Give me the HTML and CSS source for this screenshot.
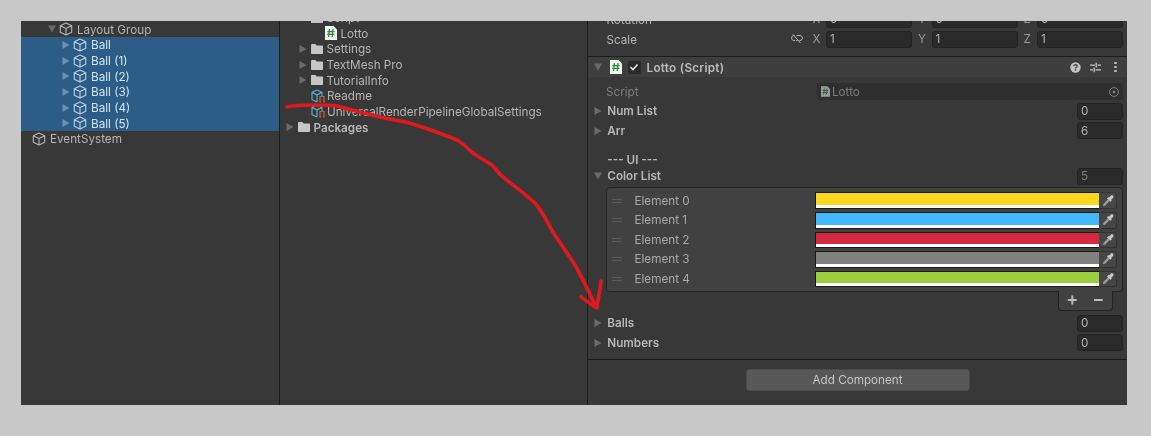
FILE: index.html
```html
<!DOCTYPE html>
<html lang="en">
<head>
<meta charset="utf-8">
<title>Unity Editor - Lotto</title>
<link rel="stylesheet" href="styles.css">
</head>
<body>
<svg class="defs" width="0" height="0" aria-hidden="true">
  <defs>
    <symbol id="cube" viewBox="0 0 14 14">
      <path d="M7 1 12.7 3.8V10.2L7 13 1.3 10.2V3.8Z M1.3 3.8 7 6.6 12.7 3.8 M7 6.6V13" fill="none" stroke="currentColor" stroke-width="1.1" stroke-linejoin="round"/>
    </symbol>
    <symbol id="arrow-r" viewBox="0 0 8 8"><path d="M0.5 0 7.5 4 0.5 8Z" fill="currentColor"/></symbol>
    <symbol id="arrow-d" viewBox="0 0 8 8"><path d="M0 0.5H8L4 7.5Z" fill="currentColor"/></symbol>
    <symbol id="folder" viewBox="0 0 12 10"><path d="M0 1.2C0 .5.4 0 1 0H4.4L5.6 1.6H11C11.6 1.6 12 2 12 2.6V9C12 9.6 11.6 10 11 10H1C.4 10 0 9.6 0 9Z" fill="currentColor"/></symbol>
    <symbol id="script" viewBox="0 0 12 14">
      <path d="M0 0H8.5L12 3.5V14H0Z" fill="#f1f3f0"/>
      <path d="M4.4 3 3.6 11M8 3 7.2 11M2.4 5.6H9.6M2.2 8.4H9.4" stroke="#2f8a3f" stroke-width="1.3" fill="none"/>
    </symbol>
    <symbol id="asset" viewBox="0 0 14 14">
      <path d="M6 1 11 3.4V8M6 13 1 10.6V3.4L6 1M1 3.4 6 5.9 11 3.4M6 5.9V13" fill="none" stroke="#56a9cf" stroke-width="1.2" stroke-linejoin="round"/>
      <path d="M10 7.5H9V13H10M12 7.5H13V13H12" fill="none" stroke="#d9662e" stroke-width="1.1"/>
    </symbol>
    <symbol id="picker" viewBox="0 0 12 12">
      <path d="M1 11 1.3 9 6 4.300 7.700 6 3 10.700Z" fill="#9a9a9a"/>
      <path d="M5 3.400 6.400 2 7 2.600 8.800.8C9.400.2 10.400.2 11 .8S11.600 2.400 11 3L9.200 4.800 9.800 5.400 8.400 6.800Z" fill="currentColor"/>
    </symbol>
  </defs>
</svg>

<div class="window">
  <section class="panel hierarchy">
    <div class="tree">
      <div class="row indent-2"><svg class="tri"><use href="#arrow-d"/></svg><svg class="cube"><use href="#cube"/></svg><span>Layout Group</span></div>
      <div class="row indent-3 selected"><svg class="tri"><use href="#arrow-r"/></svg><svg class="cube"><use href="#cube"/></svg><span>Ball</span></div>
      <div class="row indent-3 selected"><svg class="tri"><use href="#arrow-r"/></svg><svg class="cube"><use href="#cube"/></svg><span>Ball (1)</span></div>
      <div class="row indent-3 selected"><svg class="tri"><use href="#arrow-r"/></svg><svg class="cube"><use href="#cube"/></svg><span>Ball (2)</span></div>
      <div class="row indent-3 selected"><svg class="tri"><use href="#arrow-r"/></svg><svg class="cube"><use href="#cube"/></svg><span>Ball (3)</span></div>
      <div class="row indent-3 selected"><svg class="tri"><use href="#arrow-r"/></svg><svg class="cube"><use href="#cube"/></svg><span>Ball (4)</span></div>
      <div class="row indent-3 selected"><svg class="tri"><use href="#arrow-r"/></svg><svg class="cube"><use href="#cube"/></svg><span>Ball (5)</span></div>
      <div class="row indent-1"><svg class="cube"><use href="#cube"/></svg><span>EventSystem</span></div>
    </div>
  </section>

  <section class="panel project">
    <div class="tree project-tree">
      <div class="row p-indent-1"><svg class="tri"><use href="#arrow-d"/></svg><svg class="folder"><use href="#folder"/></svg><span>Script</span></div>
      <div class="row p-indent-2"><svg class="file"><use href="#script"/></svg><span>Lotto</span></div>
      <div class="row p-indent-1"><svg class="tri"><use href="#arrow-r"/></svg><svg class="folder"><use href="#folder"/></svg><span>Settings</span></div>
      <div class="row p-indent-1"><svg class="tri"><use href="#arrow-r"/></svg><svg class="folder"><use href="#folder"/></svg><span>TextMesh Pro</span></div>
      <div class="row p-indent-1"><svg class="tri"><use href="#arrow-r"/></svg><svg class="folder"><use href="#folder"/></svg><span>TutorialInfo</span></div>
      <div class="row p-indent-leaf"><svg class="asset"><use href="#asset"/></svg><span>Readme</span></div>
      <div class="row p-indent-leaf"><svg class="asset"><use href="#asset"/></svg><span>UniversalRenderPipelineGlobalSettings</span></div>
      <div class="row p-indent-0 strong"><svg class="tri"><use href="#arrow-r"/></svg><svg class="folder"><use href="#folder"/></svg><span>Packages</span></div>
    </div>
  </section>

  <section class="panel inspector">
    <div class="transform">
      <div class="prop">
        <span class="prop-name">Rotation</span>
        <div class="xyz">
          <span class="axis">X</span><span class="field">0</span>
          <span class="axis">Y</span><span class="field">0</span>
          <span class="axis">Z</span><span class="field">0</span>
        </div>
      </div>
      <div class="prop">
        <span class="prop-name">Scale</span>
        <svg class="unlink" viewBox="0 0 12 10"><path d="M3.600 1.500H3C1.600 1.500.6 2.600.6 4S1.600 6.500 3 6.500H4M5.500 1.500H9C10.400 1.500 11.400 2.600 11.400 4S10.400 6.500 9 6.500H8.400M6.500 6.500H5M2 .5 9.500 9" fill="none" stroke="currentColor" stroke-width="1"/></svg>
        <div class="xyz">
          <span class="axis">X</span><span class="field">1</span>
          <span class="axis">Y</span><span class="field">1</span>
          <span class="axis">Z</span><span class="field">1</span>
        </div>
      </div>
    </div>

    <header class="comp-head">
      <svg class="tri head-tri"><use href="#arrow-d"/></svg>
      <svg class="comp-icon"><use href="#script"/></svg>
      <span class="check"><svg viewBox="0 0 10 10"><path d="M1.500 5.200 4 7.500 8.500 2.500" fill="none" stroke="#e4e4e4" stroke-width="1.600"/></svg></span>
      <span class="comp-title">Lotto (Script)</span>
      <svg class="head-btn help" viewBox="0 0 11 11"><circle cx="5.500" cy="5.500" r="5.200" fill="#c4c4c4"/><path d="M3.800 4.300C3.800 3.300 4.500 2.700 5.500 2.700S7.200 3.300 7.200 4.100C7.200 5.200 5.500 5.200 5.500 6.500" fill="none" stroke="#3e3e3e" stroke-width="1.300"/><rect x="4.800" y="7.300" width="1.400" height="1.400" fill="#3e3e3e"/></svg>
      <svg class="head-btn sliders" viewBox="0 0 11 11"><path d="M0 3.200H5M7.500 3.200H11M0 7.800H3M5.500 7.800H11M6.200 .8V5.500M4.200 5.500V10.200" fill="none" stroke="#c4c4c4" stroke-width="1.300"/></svg>
      <span class="kebab"><i></i><i></i><i></i></span>
    </header>

    <div class="comp-body">
      <div class="line script-line">
        <span class="label dim">Script</span>
        <span class="obj-field"><svg class="obj-icon"><use href="#script"/></svg><span>Lotto</span><svg class="target" viewBox="0 0 10 10"><circle cx="5" cy="5" r="4.400" fill="none" stroke="#7f7f7f"/><circle cx="5" cy="5" r="1.300" fill="#7f7f7f"/></svg></span>
      </div>
      <div class="line foldout"><svg class="tri"><use href="#arrow-r"/></svg><span class="label bold">Num List</span><span class="field size">0</span></div>
      <div class="line foldout"><svg class="tri"><use href="#arrow-r"/></svg><span class="label bold">Arr</span><span class="field size">6</span></div>
      <div class="line ui-head"><span class="label bold">--- UI ---</span></div>
      <div class="line foldout color-head"><svg class="tri"><use href="#arrow-d"/></svg><span class="label bold">Color List</span><span class="field size dim-val">5</span></div>

      <div class="list-box">
        <div class="el"><span class="handle"></span><span class="el-name">Element 0</span><span class="swatch"><span class="swatch-fill yellow"></span></span><span class="pick"><svg><use href="#picker"/></svg></span></div>
        <div class="el"><span class="handle"></span><span class="el-name">Element 1</span><span class="swatch"><span class="swatch-fill blue"></span></span><span class="pick"><svg><use href="#picker"/></svg></span></div>
        <div class="el"><span class="handle"></span><span class="el-name">Element 2</span><span class="swatch"><span class="swatch-fill red"></span></span><span class="pick"><svg><use href="#picker"/></svg></span></div>
        <div class="el"><span class="handle"></span><span class="el-name">Element 3</span><span class="swatch"><span class="swatch-fill gray"></span></span><span class="pick"><svg><use href="#picker"/></svg></span></div>
        <div class="el"><span class="handle"></span><span class="el-name">Element 4</span><span class="swatch"><span class="swatch-fill green"></span></span><span class="pick"><svg><use href="#picker"/></svg></span></div>
      </div>
      <div class="list-foot"><span class="plus">+</span><span class="minus">−</span></div>

      <div class="line foldout balls"><svg class="tri"><use href="#arrow-r"/></svg><span class="label bold">Balls</span><span class="field size">0</span></div>
      <div class="line foldout"><svg class="tri"><use href="#arrow-r"/></svg><span class="label bold">Numbers</span><span class="field size">0</span></div>
    </div>

    <div class="add-wrap"><button class="add-btn" type="button">Add Component</button></div>
  </section>
</div>

<svg class="scribble" viewBox="0 0 1151 436" aria-hidden="true">
  <path d="M287 107C295 105 305 105 313 105 322 105 330 105 337 106 352 110 366 114 380 117 392 120 403 121 413 124 428 129 443 134 457 140 463 143 468 149 473 153 480 158 486 161 492 165 496 169 499 174 503 177 514 186 525 194 535 203 543 212 547 222 553 232 560 243 568 254 575 265 583 279 590 294 596 307" fill="none" stroke="#e2191c" stroke-width="3.600" stroke-linecap="round" stroke-linejoin="round"/>
  <path d="M581 297C587 301 592 305 597 308 598 299 600 290 601 281" fill="none" stroke="#e2191c" stroke-width="3.600" stroke-linecap="round" stroke-linejoin="round"/>
</svg>
</body>
</html>
```
FILE: styles.css
```css
* { box-sizing: border-box; }
html, body { margin: 0; height: 100%; }
body {
  position: relative;
  background: #c8c8c8;
  overflow: hidden;
  padding: 20.5px 0 0 21px;
  font-family: Inter, "Liberation Sans", sans-serif;
  font-size: 11.7px;
  color: #b4b4b4;
}
.defs { position: absolute; }
svg { display: block; flex: none; }

.window {
  display: flex;
  width: 1106px;
  height: 384px;
  background: #383838;
  filter: blur(0.45px);
}
.panel { overflow: hidden; height: 100%; }
.hierarchy { width: 257.500px; flex: none; }
.project {
  width: 309px;
  flex: none;
  padding-left: 2px;
  border-left: 1.500px solid #1c1c1c;
  border-right: 1.500px solid #1c1c1c;
}
.inspector { flex: 1; min-width: 0; display: flex; flex-direction: column; }

/* trees */
.tree { padding-top: 1px; }
.project-tree { margin-top: -11.800px; padding-left: 0; }
.row {
  display: flex;
  align-items: center;
  height: 15.670px;
  white-space: nowrap;
  color: #b4b4b4;
}
.row span { padding-top: 1px; }
.row.selected { background: #2c5d87; color: #d5e3ef; }
.row.strong { font-weight: 600; color: #b8b8b8; }
.tri { width: 8px; height: 8px; color: #6a6a6a; }
.selected .tri { color: #6c8eac; }
.cube { width: 14px; height: 14px; margin: 0 4px 0 3px; color: #b4b4b4; }
.selected .cube { color: #bdd0e0; }
.indent-1 { padding-left: 11px; }
.indent-1 .cube { margin-left: 0; }
.indent-2 { padding-left: 27px; }
.indent-3 { padding-left: 41px; }
.folder { width: 12px; height: 10px; margin: 0 4px 0 4px; color: #c6c6c6; }
.file { width: 12px; height: 14px; margin-right: 4px; }
.asset { width: 14px; height: 14px; margin-right: 2px; }
.p-indent-0 { padding-left: 4px; }
.p-indent-1 { padding-left: 17px; }
.p-indent-2 { padding-left: 43px; }
.p-indent-leaf { padding-left: 29.500px; }

/* transform */
.transform {
  flex: none;
  margin-top: -11px;
  height: 47.500px;
  border-bottom: 1px solid #1c1c1c;
}
.prop {
  display: flex;
  align-items: center;
  height: 19.700px;
  padding: 0 4px 0 19px;
  color: #b4b4b4;
}
.prop-name { width: 184px; flex: none; padding-top: 1px; }
.prop:first-child .prop-name { margin-right: 21px; }
.unlink { width: 12px; height: 10px; margin: 0 9px 0 0; color: #b4b4b4; }
.xyz { display: flex; align-items: center; flex: 1; }
.axis { width: 14.500px; flex: none; padding-left: 1px; color: #9a9a9a; }
.xyz .axis + .field + .axis { margin-left: 5px; }
.field {
  display: flex;
  align-items: center;
  height: 17px;
  flex: 1;
  padding-left: 3px;
  background: #2a2a2a;
  border: 1px solid #232323;
  border-radius: 3px;
  color: #b4b4b4;
}

/* component header */
.comp-head {
  flex: none;
  display: flex;
  align-items: center;
  height: 20px;
  padding-right: 10px;
  background: #3e3e3e;
}
.head-tri { margin-left: 6px; }
.comp-icon { width: 12px; height: 14px; margin-left: 8px; }
.check {
  width: 13px;
  height: 13px;
  margin-left: 6px;
  padding: 1.500px;
  background: #2a2a2a;
  border-radius: 2px;
}
.comp-title { margin-left: 6px; padding-top: 1px; font-weight: 600; letter-spacing: 0.28px; color: #bdbdbd; flex: 1; }
.head-btn { width: 11px; height: 11px; }
.help { margin-right: 9px; }
.sliders { margin-right: 13px; }
.kebab { display: flex; flex-direction: column; gap: 1.500px; width: 3px; }
.kebab i { display: block; width: 2.500px; height: 2.500px; background: #bcbcbc; border-radius: 1px; }

/* body */
.comp-body { flex: none; padding: 5px 4px 0 6.500px; height: 283px; border-bottom: 1px solid #1c1c1c; }
.line { display: flex; align-items: center; height: 19.600px; }
.label { white-space: nowrap; color: #b4b4b4; }
.label.bold { font-weight: 600; color: #b8b8b8; }
.label.dim { color: #7c7c7c; }
.script-line { padding-left: 12px; }
.script-line .label { width: 211px; flex: none; }
.foldout .tri { margin-right: 5.300px; }
.foldout .label { flex: 1; }
.obj-field {
  display: flex;
  align-items: center;
  flex: 1;
  height: 17px;
  padding-left: 4px;
  background: #2f2f2f;
  border-radius: 3px;
  color: #7c7c7c;
}
.obj-field > span { flex: 1; }
.obj-icon { width: 9px; height: 11px; margin-right: 2px; opacity: .55; }
.target { width: 10px; height: 10px; margin-right: 4px; }
.size { flex: none; width: 46px; }
.dim-val { color: #7c7c7c; }
.ui-head { margin-top: 9px; padding-left: 13.300px; height: 19.600px; }
.color-head { height: 15px; margin-top: -0.500px; margin-bottom: 3.500px; }

.list-box {
  margin-left: 11.500px;
  height: 105px;
  padding: 2.500px 5px 0 0;
  background: #414141;
  border: 1px solid #242424;
  border-radius: 4px;
}
.el { display: flex; align-items: center; height: 19.600px; }
.handle {
  flex: none;
  width: 10px;
  height: 4px;
  margin-left: 5px;
  border-top: 1px solid #5a5a5a;
  border-bottom: 1px solid #5a5a5a;
}
.el-name { flex: none; width: 180px; margin-left: 13px; color: #a8a8a8; }
.swatch {
  flex: 1;
  height: 16.500px;
  background: #fff;
  border: 1px solid #1a1a1a;
  border-right: 0;
  padding-bottom: 3px;
}
.swatch-fill { display: block; height: 100%; }
.yellow { background: #fbd71f; }
.blue { background: #42b8fd; }
.red { background: #d42a41; }
.gray { background: #808080; }
.green { background: #9ccf3d; }
.pick {
  flex: none;
  width: 18px;
  height: 16.500px;
  display: flex;
  align-items: center;
  justify-content: center;
  background: #464646;
  border: 1px solid #333;
  border-left: 0;
  border-radius: 0 3px 3px 0;
  color: #c8c8c8;
}
.pick svg { width: 12px; height: 12px; }
.list-foot {
  display: flex;
  align-items: center;
  justify-content: center;
  gap: 14px;
  width: 55.500px;
  height: 19.500px;
  margin: -1px 10px 0 auto;
  padding: 0 0 3px;
  background: #414141;
  border: 1px solid #242424;
  border-top: 0;
  border-radius: 0 0 4px 4px;
  font-size: 18px;
  font-weight: 600;
  line-height: 1;
  color: #bcbcbc;
}
.balls { margin-top: 2.500px; }

/* add component */
.add-wrap { flex: 1; display: flex; justify-content: center; padding: 8.500px 0 0 0.5px; }
.add-btn {
  width: 224px;
  height: 22px;
  padding: 0;
  background: #585858;
  border: 1px solid #4a4a4a;
  border-radius: 3px;
  font: inherit;
  color: #c4c4c4;
}

/* freehand annotation */
.scribble {
  position: absolute;
  left: 0;
  top: 0;
  width: 1151px;
  height: 436px;
  pointer-events: none;
  filter: blur(0.3px);
}
```
